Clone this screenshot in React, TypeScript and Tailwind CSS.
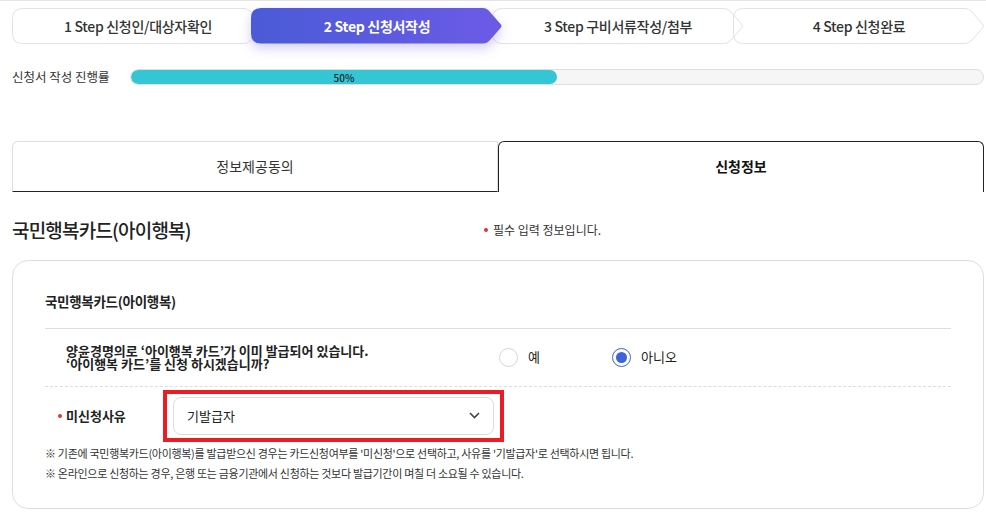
import React from 'react';

const font = { fontFamily: '"Noto Sans CJK KR", "Noto Sans", sans-serif' };

const steps = [
  { label: '1 Step 신청인/대상자확인', active: false, ml: '' },
  { label: '2 Step 신청서작성', active: true, ml: '-ml-[13px]' },
  { label: '3 Step 구비서류작성/첨부', active: false, ml: '-ml-[11px]' },
  { label: '4 Step 신청완료', active: false, ml: '-ml-[11px]' },
];

const shape =
  'M10.5 0.5 H232 Q236 0.5 239 4 L249.5 16 Q251.5 18 249.5 20 L239 32 Q236 35.5 232 35.5 H10.5 Q0.5 35.5 0.5 25.5 V10.5 Q0.5 0.5 10.5 0.5 Z';

const Step: React.FC<{ label: string; active: boolean; ml: string; first: boolean }> = ({ label, active, ml, first }) => (
  <div className={`relative w-[252px] h-[36px] flex items-center justify-center shrink-0 ${ml} ${active ? 'z-10' : ''}`}>
    <svg
      className={`absolute inset-0 ${active ? 'drop-shadow-[0_5px_6px_rgba(95,85,225,0.28)]' : ''}`}
      width="252"
      height="36"
      viewBox="0 0 252 36"
    >
      <defs>
        <linearGradient id="stepGrad" x1="0" y1="0" x2="1" y2="0">
          <stop offset="0" stopColor="#4a5bd7" />
          <stop offset="1" stopColor="#6c5ae6" />
        </linearGradient>
      </defs>
      {active ? (
        <path d={shape.replace(/0\.5/g, '0')} fill="url(#stepGrad)" />
      ) : (
        <path d={shape} fill={first ? '#ffffff' : 'none'} stroke="#e2e2e2" strokeWidth="1" />
      )}
    </svg>
    <span className={`relative text-[14px] tracking-[-0.3px] ${active ? 'text-white font-bold' : 'text-[#333] font-medium'}`}>
      {label}
    </span>
  </div>
);

const Radio: React.FC<{ checked: boolean; label: string; className?: string }> = ({ checked, label, className = '' }) => (
  <label className={`flex items-center gap-[10px] ${className}`}>
    <span
      className={`w-[19px] h-[19px] rounded-full border flex items-center justify-center ${
        checked ? 'border-[#3d63dd] border-[1.5px]' : 'border-[#d6d6d6]'
      }`}
    >
      {checked && <span className="w-[11px] h-[11px] rounded-full bg-[#3d63dd]" />}
    </span>
    <span className="text-[13px] text-[#222]">{label}</span>
  </label>
);

const Dot = () => <span className="inline-block w-[4px] h-[4px] rounded-full bg-[#e03535]" />;

export default function App() {
  return (
    <div className="w-[986px] h-[518px] bg-white overflow-hidden border-t border-[#e5e5e5]" style={font}>
      {/* steps */}
      <div className="flex pl-[12px] pt-[7px]">
        {steps.map((s, i) => (
          <Step key={s.label} label={s.label} active={s.active} ml={s.ml} first={i === 0} />
        ))}
      </div>

      {/* progress */}
      <div className="flex items-center pl-[12px] pr-[2px] mt-[24px]">
        <span className="w-[118px] text-[12.5px] text-[#333]">신청서 작성 진행률</span>
        <div className="flex-1 h-[16px] rounded-full bg-[#f6f6f6] border border-[#dedede] overflow-hidden">
          <div className="w-1/2 h-full rounded-full bg-[#35c6d6] flex items-center justify-center">
            <span className="text-[10px] text-[#222] font-medium">50%</span>
          </div>
        </div>
      </div>

      {/* tabs */}
      <div className="flex pl-[12px] pr-[2px] mt-[54px] h-[51px]">
        <div className="flex-1 flex items-center justify-center border border-[#dddddd] border-b-[#222] rounded-tl-[6px] text-[14px] text-[#333]">
          정보제공동의
        </div>
        <div className="flex-1 flex items-center justify-center border border-[#222] border-b-0 rounded-t-[6px] text-[14px] font-bold text-[#111]">
          신청정보
        </div>
      </div>

      {/* title */}
      <div className="flex items-center pl-[12px] pr-[2px] mt-[24px]">
        <h2 className="w-[472px] text-[19px] font-medium text-[#222] tracking-[-0.8px]">국민행복카드(아이행복)</h2>
        <p className="text-[12px] text-[#333] flex items-center gap-[5px]">
          <Dot />
          <span>필수 입력 정보입니다.</span>
        </p>
      </div>

      {/* card */}
      <div className="ml-[12px] mr-[2px] mt-[16px] border border-[#dedede] rounded-[16px] px-[32px] pt-[30px] pb-[25px]">
        <h3 className="text-[13.5px] font-semibold text-[#222] tracking-[-0.3px] pb-[16px] border-b border-[#dedede]">국민행복카드(아이행복)</h3>

        <div className="flex items-center h-[58px] border-b border-dashed border-[#dcdcdc]">
          <p className="w-[454px] pl-[21px] text-[13px] font-bold text-[#222] leading-[13px]">
            양윤경명의로 ‘아이행복 카드’가 이미 발급되어 있습니다.
            <br />
            ‘아이행복 카드’를 신청 하시겠습니까?
          </p>
          <div className="flex items-center">
            <Radio checked={false} label="예" className="w-[113px]" />
            <Radio checked label="아니오" />
          </div>
        </div>

        <div className="flex items-center pt-[3px] pl-[13px]">
          <span className="w-[105px] text-[13px] font-bold text-[#222] flex items-center gap-[4px]">
            <Dot />
            미신청사유
          </span>
          <div className="border-[4px] border-[#ec1c24] px-[6px] py-[3px] w-[341px]">
            <div className="h-[38px] border border-[#dddddd] rounded-[8px] flex items-center justify-between px-[13px]">
              <span className="text-[13px] text-[#222]">기발급자</span>
              <svg width="11" height="7" viewBox="0 0 11 7" fill="none">
                <path d="M1 1l4.5 4.5L10 1" stroke="#444" strokeWidth="1.6" />
              </svg>
            </div>
          </div>
        </div>

        <div className="mt-[1px] text-[11px] text-[#333] tracking-[-0.3px] leading-[20px]">
          <p>※ 기존에 국민행복카드(아이행복)를 발급받으신 경우는 카드신청여부를 '미신청'으로 선택하고, 사유를 '기발급자'로 선택하시면 됩니다.</p>
          <p>※ 온라인으로 신청하는 경우, 은행 또는 금융기관에서 신청하는 것보다 발급기간이 며칠 더 소요될 수 있습니다.</p>
        </div>
      </div>
    </div>
  );
}
